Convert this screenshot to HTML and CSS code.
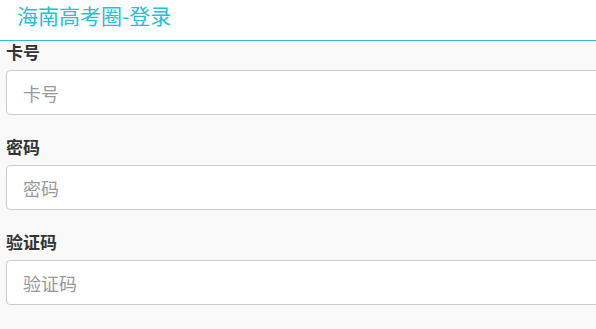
FILE: index.html
```html
<!DOCTYPE html>
<html lang="zh">
<head>
<meta charset="utf-8">
<title>海南高考圈-登录</title>
<link rel="stylesheet" href="styles.css">
</head>
<body>
<header class="topbar">海南高考圈-登录</header>
<form class="form">
  <div class="field">
    <label class="label" for="card">卡号</label>
    <input class="input" id="card" type="text" placeholder="卡号">
  </div>
  <div class="field">
    <label class="label" for="pwd">密码</label>
    <input class="input" id="pwd" type="password" placeholder="密码">
  </div>
  <div class="field">
    <label class="label" for="code">验证码</label>
    <input class="input" id="code" type="text" placeholder="验证码">
  </div>
</form>
</body>
</html>
```
FILE: styles.css
```css
html, body {
  margin: 0;
  padding: 0;
  overflow: hidden;
}
body {
  background: #f9f9f9;
  font-family: "Noto Sans CJK SC", "Noto Sans", sans-serif;
}
.topbar {
  height: 40px;
  line-height: 31px;
  padding-left: 17px;
  background: #fff;
  color: #2cbcd4;
  font-size: 21px;
  border-bottom: 1px solid #3bb8c8;
  box-shadow: 0 1px 2px rgba(60, 200, 220, 0.12);
}
.form {
  padding-left: 6px;
}
.field {
  display: flex;
  flex-direction: column;
  margin-bottom: 21px;
}
.label {
  font-size: 17px;
  font-weight: bold;
  color: #333;
  line-height: 22px;
  margin-left: 0;
  margin-bottom: 7px;
}
.input {
  box-sizing: border-box;
  width: 620px;
  height: 45px;
  border: 1px solid #ccc;
  border-radius: 4px;
  background: #fff;
  padding: 0 16px;
  font-size: 18px;
  font-family: "Noto Sans CJK SC", "Noto Sans", sans-serif;
  color: #333;
  outline: none;
}
.input::placeholder {
  color: #999;
}
```
